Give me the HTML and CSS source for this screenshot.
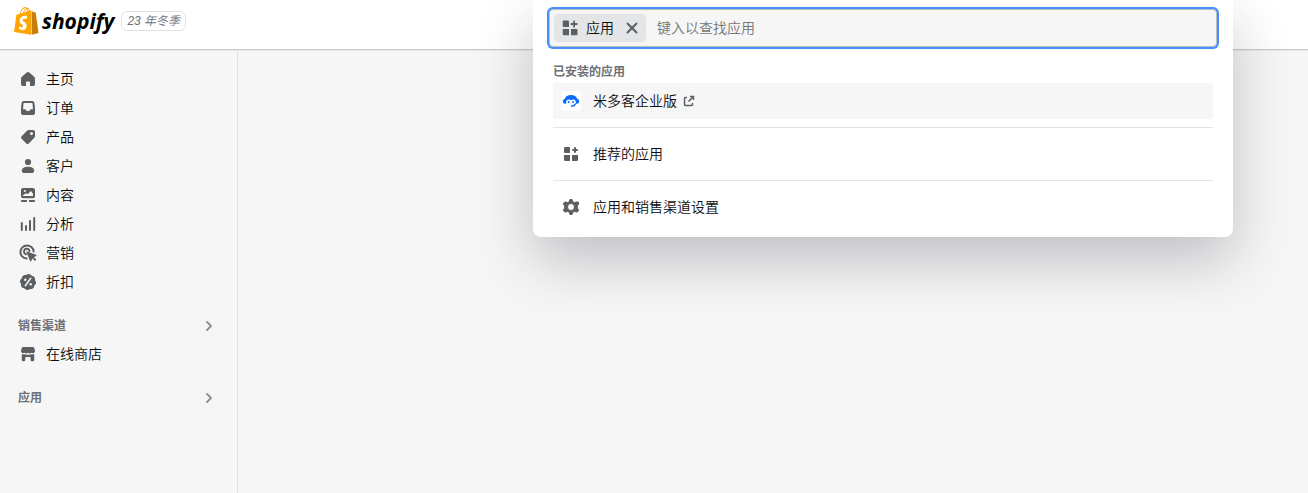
FILE: index.html
```html
<!DOCTYPE html>
<html lang="zh-CN">
<head>
    <meta charset="UTF-8">
    <meta name="viewport" content="width=device-width, initial-scale=1.0">
    <title>Shopify</title>
    <link rel="stylesheet" href="styles.css">
</head>
<body>
    <header class="topbar">
        <a class="logo" href="#">
            <svg class="logo-bag" viewBox="0 0 110 125">
                <path fill="#ffa500" d="M74.7,14.8c0,0-1.4,0.4-3.7,1.1c-0.4-1.3-1-2.8-1.8-4.4c-2.6-5-6.5-7.7-11.1-7.7c-0.3,0-0.6,0-1,0.1c-0.1-0.2-0.3-0.3-0.4-0.5c-2-2.2-4.6-3.2-7.7-3.1c-6,0.2-12,4.5-16.8,12.2c-3.4,5.4-6,12.2-6.8,17.5c-6.9,2.1-11.7,3.6-11.8,3.7c-3.5,1.1-3.6,1.2-4,4.5C9.1,40.7,0,111.2,0,111.2l75.6,13.1V14.6C75.2,14.7,74.9,14.7,74.7,14.8z M57.2,20.2c-4,1.2-8.4,2.6-12.7,3.9c1.2-4.7,3.6-9.4,6.4-12.5c1.1-1.1,2.6-2.4,4.3-3.2C56.9,12,57.3,16.9,57.2,20.2z M49.1,4.3c1.4,0,2.6,0.3,3.6,0.9c-1.6,0.8-3.2,2.1-4.7,3.6c-3.8,4.1-6.7,10.5-7.9,16.6c-3.6,1.1-7.2,2.2-10.5,3.2C31.7,19.1,39.8,4.6,49.1,4.3z M61.2,19c0-3-0.4-7.3-1.8-10.9c4.6,0.9,6.8,6,7.8,9.1C65.4,17.7,63.4,18.3,61.2,19z"/>
                <path fill="#c57f0a" d="M78.1,123.9l31.4-7.8c0,0-13.5-91.3-13.6-91.9c-0.1-0.6-0.6-1-1.1-1c-0.5,0-9.3-0.2-9.3-0.2s-5.4-5.2-7.4-7.2V123.9z"/>
                <path fill="#fff" d="M37.4,59.3c0.4,6.4,17.3,7.8,18.3,22.9c0.7,11.9-6.3,20-16.4,20.6c-12.2,0.8-18.9-6.4-18.9-6.4l2.6-11c0,0,6.7,5.1,12.1,4.7c3.5-0.2,4.8-3.1,4.7-5.1c-0.5-8.4-14.3-7.9-15.2-21.7C23.8,51.8,31.4,40.1,48.2,39c6.5-0.4,9.8,1.2,9.8,1.2l-3.8,14.4c0,0-4.3-2-9.4-1.6C37.4,53.5,37.3,58.2,37.4,59.3z"/>
            </svg>
            <span class="logo-text">shopify</span>
        </a>
        <span class="edition">23 年冬季</span>
    </header>

    <div class="layout">
        <nav class="sidebar">
            <ul class="nav-list">
                <li><a class="nav-item" href="#">
                    <svg class="icon" viewBox="0 0 20 20"><path d="M8.700 3.500a2 2 0 0 1 2.600 0l4.600 3.900A3 3 0 0 1 17 9.700v5.600a1.700 1.700 0 0 1-1.700 1.700H12.600a.6.600 0 0 1-.6-.6V13.500a1 1 0 0 0-1-1H9a1 1 0 0 0-1 1v2.900a.6.600 0 0 1-.6.6H4.700A1.700 1.700 0 0 1 3 15.300V9.700a3 3 0 0 1 1.100-2.300z"/></svg>
                    主页</a></li>
                <li><a class="nav-item" href="#">
                    <svg class="icon" viewBox="0 0 20 20"><path fill-rule="evenodd" d="M5.700 3h8.600a2.200 2.200 0 0 1 2.100 1.900L17 10v5a2 2 0 0 1-2 2H5a2 2 0 0 1-2-2v-5l.6-5.100a2.200 2.200 0 0 1 2.100-1.900zM6.200 5a.7.700 0 0 0-.7.600L5 11.200H7a1 1 0 0 1 .9.500l.4.700a1 1 0 0 0 .9.500h1.600a1 1 0 0 0 .9-.5l.4-.7a1 1 0 0 1 .9-.5h2l-.5-5.600a.7.700 0 0 0-.7-.6z"/></svg>
                    订单</a></li>
                <li><a class="nav-item" href="#">
                    <svg class="icon" viewBox="0 0 20 20"><path fill-rule="evenodd" d="M10.800 3H15.200A1.800 1.800 0 0 1 17 4.800V9a2.500 2.500 0 0 1-.7 1.800L10.800 16.400a1.800 1.800 0 0 1-2.500 0L3.600 11.700a1.800 1.800 0 0 1 0-2.500L9 3.700A2.500 2.500 0 0 1 10.800 3zM13.500 5a1.500 1.500 0 1 0 0 3a1.500 1.500 0 0 0 0-3z"/></svg>
                    产品</a></li>
                <li><a class="nav-item" href="#">
                    <svg class="icon" viewBox="0 0 20 20"><circle cx="10" cy="6" r="3.100"/><path d="M10 10.700c3.600 0 6.200 1.500 6.200 3.700 0 1.600-1.100 2.600-2.600 2.600H6.400C4.900 17 3.800 16 3.800 14.400c0-2.200 2.600-3.700 6.200-3.700z"/></svg>
                    客户</a></li>
                <li><a class="nav-item" href="#">
                    <svg class="icon" viewBox="0 0 20 20"><path fill-rule="evenodd" d="M5 3h10a2 2 0 0 1 2 2v6.200a2 2 0 0 1-2 2H5a2 2 0 0 1-2-2V5a2 2 0 0 1 2-2zM6.800 5a1 1 0 1 0 0 2a1 1 0 0 0 0-2zM5 11h10V8.800L13.300 6.500a.7.700 0 0 0-1.100 0L9.800 9.300 8.600 8.500a.8.800 0 0 0-1 0L5 10.300z"/><path d="M3.900 15.100h4.300a1 1 0 0 1 0 2H3.900a1 1 0 0 1 0-2zM11.800 15.100h4.300a1 1 0 0 1 0 2h-4.300a1 1 0 0 1 0-2z"/></svg>
                    内容</a></li>
                <li><a class="nav-item" href="#">
                    <svg class="icon" viewBox="0 0 20 20"><path class="stroke" d="M3.800 9v7M8 12v4M12 7v9M16.200 4v12"/></svg>
                    分析</a></li>
                <li><a class="nav-item" href="#">
                    <svg class="icon" viewBox="0 0 20 20"><path class="stroke" d="M8.500 15.600A6.600 6.600 0 1 1 15.600 8.500M8 11.300A2.800 2.800 0 1 1 11.500 8"/><path d="M9 8.400 18 11.800a.7.700 0 0 1 .1 1.200l-2.200 1.200 1.900 1.900a.9.900 0 0 1-1.300 1.300l-1.900-1.900-1.400 2.500a.7.700 0 0 1-1.200-.1L8.400 9a.5.500 0 0 1 .6-.6z"/></svg>
                    营销</a></li>
                <li><a class="nav-item" href="#">
                    <svg class="icon" viewBox="0 0 20 20"><circle class="scallop" cx="10" cy="10" r="7"/><circle cx="10" cy="10" r="7.500"/><path class="cut" d="M12.700 6.300 7.300 13.700"/><circle fill="#f6f6f6" cx="7.300" cy="7.800" r="1.200"/><circle fill="#f6f6f6" cx="12.700" cy="12.200" r="1.200"/></svg>
                    折扣</a></li>
            </ul>

            <button class="nav-heading" type="button">销售渠道
                <svg class="icon chevron" viewBox="0 0 20 20"><path d="M8 6l4 4-4 4"/></svg>
            </button>
            <ul class="nav-list">
                <li><a class="nav-item" href="#">
                    <svg class="icon" viewBox="0 0 20 20"><path d="M5 2.900h10a1.200 1.200 0 0 1 1.100.8L17 6.200v1a2.200 2.200 0 0 1-3.500 1.500 2.600 2.600 0 0 1-3.500 0 2.600 2.600 0 0 1-3.500 0A2.200 2.200 0 0 1 3 7.200v-1l.9-2.500A1.200 1.200 0 0 1 5 2.900z"/><path d="M3.800 10.200h2.700l1.800.5h3.400l1.800-.5h2.700V16a1.200 1.200 0 0 1-1.200 1.200h-1.200a1.200 1.200 0 0 1-1.200-1.200v-2a1 1 0 0 0-1-1H8.200a1 1 0 0 0-1 1v2A1.200 1.200 0 0 1 6 17.200H5A1.200 1.200 0 0 1 3.800 16z"/></svg>
                    在线商店</a></li>
            </ul>

            <button class="nav-heading" type="button">应用
                <svg class="icon chevron" viewBox="0 0 20 20"><path d="M8 6l4 4-4 4"/></svg>
            </button>
        </nav>
        <main class="content"></main>
    </div>

    <!-- Search panel, opens over the page -->
    <div class="panel" role="dialog" aria-label="应用">
        <div class="search">
            <span class="chip">
                <svg class="icon" viewBox="0 0 20 20"><path d="M4 2.600h3.700a1.300 1.300 0 0 1 1.300 1.300V9H4a1.300 1.300 0 0 1-1.300-1.300V3.900A1.300 1.300 0 0 1 4 2.600zM2.700 11H9v6.300H4A1.300 1.300 0 0 1 2.700 16zM11 11h5.200a1.300 1.300 0 0 1 1.300 1.300V16a1.300 1.300 0 0 1-1.300 1.300H11zM13.200 3.300a.9.900 0 0 1 1.800 0v1.800h1.800a.9.900 0 0 1 0 1.800H15v1.800a.9.900 0 0 1-1.800 0V6.900h-1.800a.9.900 0 0 1 0-1.800h1.800z"/></svg>
                应用
                <button class="chip-close" type="button" aria-label="移除">
                    <svg class="icon" viewBox="0 0 20 20"><path class="stroke" d="M5.500 5.500l9 9M14.500 5.500l-9 9"/></svg>
                </button>
            </span>
            <input class="search-input" type="text" placeholder="键入以查找应用" aria-label="键入以查找应用">
        </div>

        <div class="results">
            <h2 class="results-title">已安装的应用</h2>
            <a class="result active" href="#">
                <svg class="app-logo" viewBox="0 0 20 20"><rect width="20" height="20" rx="4" fill="#fff"/><path fill="#0a6cff" d="M10 4c3.300 0 5.500 1.500 6.300 4A2.300 2.300 0 0 1 18.200 10.300c0 1.500-1 2.400-2.400 2.400h-1.200c.2-.6.3-1.200.2-1.900-.3-1.500-1.300-2.300-2.600-2.300-.9 0-1.600.3-2.200.8-.6-.5-1.300-.8-2.200-.8-1.300 0-2.300.8-2.600 2.300-.1.700 0 1.300.2 1.900H4.200c-1.400 0-2.400-.9-2.400-2.400A2.300 2.300 0 0 1 3.700 8C4.500 5.500 6.700 4 10 4z"/><circle cx="7.700" cy="11" r="1" fill="#0a6cff"/><circle cx="12" cy="11" r="1" fill="#0a6cff"/><path fill="none" stroke="#0a6cff" stroke-width="1.500" stroke-linecap="round" d="M10.500 15h1.300c1.200 0 1.900-.8 2.400-1.900"/></svg>
                米多客企业版
                <svg class="external" viewBox="0 0 12 12"><path d="M4 2.500H2.500a1 1 0 0 0-1 1v6a1 1 0 0 0 1 1h6a1 1 0 0 0 1-1V8M7 1.500h3.500V5M10.500 1.500 5.500 6.500"/></svg>
            </a>
            <hr class="divider">
            <a class="result" href="#">
                <svg class="icon" viewBox="0 0 20 20"><path d="M4.300 3H8a1 1 0 0 1 1 1v5H4.300A1.300 1.300 0 0 1 3 7.700V4.300A1.300 1.300 0 0 1 4.300 3zM3 11h6v6H4.300A1.300 1.300 0 0 1 3 15.700zM11 11h6v4.700a1.300 1.300 0 0 1-1.300 1.300H11zM13 4a1 1 0 0 1 2 0v1h1a1 1 0 0 1 0 2h-1v1a1 1 0 0 1-2 0V7h-1a1 1 0 0 1 0-2h1z"/></svg>
                推荐的应用
            </a>
            <hr class="divider">
            <a class="result" href="#">
                <svg class="icon" viewBox="0 0 20 20"><path fill-rule="evenodd" stroke="#5c5f62" stroke-width="1" stroke-linejoin="round" d="M8.900 2.500h2.200l.5 2.100 1.700 1 2.100-.6 1.900 0 .3 2.300-1.300 1.600v2.200l1.300 1.600-1.100 2.300-1.100 0-2.100-.6-1.700 1-.5 2.100H8.900l-.5-2.100-1.700-1-2.100.6-1.100 0-1.100-2.300 1.300-1.600V8.900L2.400 7.300 3.500 5l1.100 0 2.100.6 1.700-1zM10 6.500a3.500 3.500 0 1 0 0 7a3.500 3.500 0 0 0 0-7z"/></svg>
                应用和销售渠道设置
            </a>
        </div>
    </div>
</body>
</html>
```
FILE: styles.css
```css
* {
    box-sizing: border-box;
}
body {
    margin: 0;
    min-height: 100vh;
    display: flex;
    flex-direction: column;
    position: relative;
    overflow-x: hidden;
    background-color: #f6f6f6;
    color: #0c0d0e;
    font-family: "Liberation Sans", "Noto Sans CJK SC", sans-serif;
    font-size: 14px;
    font-weight: 350;
    line-height: 20px;
}
a {
    color: inherit;
    text-decoration: none;
}
button {
    border: none;
    background: none;
    padding: 0;
    font: inherit;
    cursor: pointer;
}
.icon {
    width: 20px;
    height: 20px;
    flex: none;
    fill: #5c5f62;
}
.stroke {
    fill: none;
    stroke: #5c5f62;
    stroke-width: 2;
    stroke-linecap: round;
}
.cut {
    stroke: #f6f6f6;
    stroke-width: 1.5;
    stroke-linecap: round;
}
/* Round dots along the edge of the discount badge */
.scallop {
    stroke: #5c5f62;
    stroke-width: 2;
    stroke-linecap: round;
    stroke-dasharray: 1.5 4;
}

/* Top bar */
.topbar {
    display: flex;
    align-items: center;
    gap: 7px;
    padding: 7px 14px 14px;
    background-color: #fff;
    border-bottom: 1px solid #c9cccf;
    box-shadow: 0 1px 1px rgba(0, 0, 0, 0.06);
}
.logo {
    display: flex;
    align-items: center;
    gap: 3px;
}
.logo-bag {
    width: 25px;
    height: 28px;
}
.logo-text {
    color: #000;
    font-family: "Open Sans", sans-serif;
    font-size: 21px;
    font-weight: 700;
    font-style: italic;
    line-height: 28px;
}
.edition {
    padding: 0 5px;
    border: 1px solid #dfe0e2;
    border-radius: 6px;
    color: #6d7175;
    font-size: 12px;
    font-style: italic;
    line-height: 18px;
}

/* Sidebar */
.layout {
    flex: 1;
    display: flex;
}
.sidebar {
    width: 238px;
    flex: none;
    padding: 15px 18px;
    border-right: 1px solid #e1e3e5;
}
.content {
    flex: 1;
}
.nav-list {
    display: flex;
    flex-direction: column;
    gap: 1px;
    margin: 0;
    padding: 0;
    list-style: none;
}
.nav-item {
    display: flex;
    align-items: center;
    gap: 8px;
    height: 28px;
}
.nav-heading {
    display: flex;
    align-items: center;
    justify-content: space-between;
    width: 100%;
    height: 28px;
    margin-top: 16px;
    color: #6d7175;
    font-size: 12px;
    font-weight: 600;
}
.chevron {
    fill: none;
    stroke: #8c9196;
    stroke-width: 1.8;
    stroke-linecap: round;
    stroke-linejoin: round;
}

/* Search panel */
.panel {
    position: absolute;
    top: 0;
    right: 75px;
    width: 700px;
    max-width: 100%;
    padding: 9px 0 12px;
    background-color: #fff;
    border-radius: 0 0 8px 8px;
    box-shadow: 0 24px 56px rgba(23, 24, 40, 0.24);
}
.search {
    display: flex;
    align-items: center;
    margin: 0 16px;
    padding: 4px;
    background-color: #f6f6f6;
    border: 1px solid #babfc3;
    border-radius: 4px;
    box-shadow: 0 0 0 2px #458fff;
}
.chip {
    display: flex;
    align-items: center;
    gap: 6px;
    height: 28px;
    padding: 0 2px 0 6px;
    background-color: #e4e5e7;
    border-radius: 4px;
}
.chip-close {
    display: flex;
    justify-content: center;
    width: 24px;
}
.search-input {
    flex: 1;
    min-width: 0;
    padding: 0 11px;
    border: none;
    outline: none;
    background: none;
    font: inherit;
}
.search-input::placeholder {
    color: #757575;
}
.results {
    padding: 17px 20px 0;
}
.results-title {
    margin: 0 0 3px;
    color: #6d7175;
    font-size: 12px;
    font-weight: 600;
    line-height: 16px;
}
.result {
    display: flex;
    align-items: center;
    gap: 12px;
    height: 36px;
    padding: 0 8px;
    border-radius: 3px;
}
.result.active {
    background-color: #f6f6f6;
}
.app-logo {
    width: 20px;
    height: 20px;
}
.external {
    width: 12px;
    height: 12px;
    margin-left: -6px;
    fill: none;
    stroke: #5c5f62;
    stroke-width: 1.5;
}
.divider {
    margin: 8px 0;
    border: none;
    border-top: 1px solid #e1e3e5;
}
```
